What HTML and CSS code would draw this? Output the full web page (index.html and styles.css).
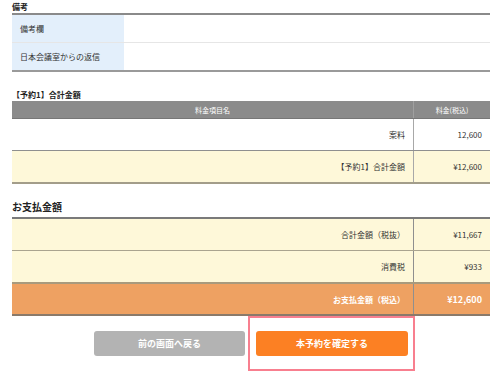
FILE: index.html
```html
<!DOCTYPE html>
<html lang="ja">
<head>
    <meta charset="UTF-8">
    <title>予約確認</title>
    <link rel="stylesheet" href="styles.css">
</head>
<body>
    <div class="page">
        <h3 class="sub-title first">備考</h3>
        <table class="note-table">
            <tr>
                <th>備考欄</th>
                <td></td>
            </tr>
            <tr>
                <th>日本会議室からの返信</th>
                <td></td>
            </tr>
        </table>

        <h3 class="sub-title">【予約1】合計金額</h3>
        <table class="price-table">
            <tr class="head">
                <th>料金項目名</th>
                <th class="price">料金(税込)</th>
            </tr>
            <tr class="plain">
                <td>案料</td>
                <td class="price">12,600</td>
            </tr>
            <tr class="total">
                <td>【予約1】合計金額</td>
                <td class="price">¥12,600</td>
            </tr>
        </table>

        <h2 class="pay-title">お支払金額</h2>
        <table class="price-table pay-table">
            <tr class="total">
                <td>合計金額（税抜）</td>
                <td class="price">¥11,667</td>
            </tr>
            <tr class="total">
                <td>消費税</td>
                <td class="price">¥933</td>
            </tr>
            <tr class="grand">
                <td>お支払金額（税込）</td>
                <td class="price">¥12,600</td>
            </tr>
        </table>

        <div class="actions">
            <button class="btn btn-back">前の画面へ戻る</button>
            <div class="highlight">
                <button class="btn btn-confirm">本予約を確定する</button>
            </div>
        </div>
    </div>
</body>
</html>
```

FILE: styles.css
```css
body {
    margin: 0;
    background-color: #fff;
    color: #333;
    font-family: "Noto Sans CJK JP", "Noto Sans", sans-serif;
}

.page {
    width: 478px;
    padding: 0 10px 0 12px;
}

.sub-title {
    margin: 0;
    font-size: 8px;
    font-weight: bold;
    line-height: 12px;
    height: 12px;
    padding-top: 1px;
    color: #222;
}

.first {
    padding-top: 1px;
}

table {
    width: 100%;
    border-collapse: collapse;
    font-size: 8px;
}

.note-table {
    border-top: 2px solid #8a8a8a;
    border-bottom: 2px solid #9a9a9a;
    margin-bottom: 16px;
}

.note-table th,
.note-table td {
    height: 27px;
    padding: 0;
    border-bottom: 1px solid #e6e6e6;
}

.note-table th {
    width: 104px;
    padding-left: 8px;
    text-align: left;
    font-weight: normal;
    background-color: #e3effb;
}

.price-table td,
.price-table th {
    padding: 0 8px;
    text-align: right;
}

.price-table .price {
    width: 60px;
    border-left: 1px solid #a8a8a8;
}

.head th {
    height: 17px;
    background-color: #8b8b8b;
    color: #fff;
    font-weight: normal;
    font-size: 7px;
    text-align: center;
    border-bottom: 1px solid #777;
}

.head th.price {
    text-align: center;
    border-left: 1px solid #a0a0a0;
}

.plain td {
    height: 31px;
    background-color: #fff;
    border-bottom: 1px solid #8f8f8f;
}

.total td {
    height: 31px;
    background-color: #fef8d9;
    border-bottom: 2px solid #a39d8a;
}

.pay-title {
    margin: 13px 0 0;
    height: 20px;
    font-size: 10px;
    line-height: 20px;
    font-weight: bold;
    color: #222;
}

.pay-table {
    border-top: 2px solid #7a7a7a;
}

.pay-table .total td {
    border-bottom: 1px solid #aaa48f;
}

.pay-table .total + .total td {
    border-bottom: 2px solid #a89a7d;
}

.pay-table .price {
    border-left: 1px solid #8f8f8f;
}

.grand td {
    height: 30px;
    background-color: #eea162;
    color: #fff;
    font-weight: bold;
    border-bottom: 2px solid #8a7a6a;
}

.grand .price {
    font-size: 9px;
}

.actions {
    display: flex;
    align-items: center;
    gap: 3px;
    padding-left: 82px;
}

.highlight {
    border: 2px solid #f87f8f;
    padding: 10px 5px 13px 6px;
}

.btn {
    width: 152px;
    height: 25px;
    border: none;
    border-radius: 3px;
    color: #fff;
    font-family: "Noto Sans CJK JP", sans-serif;
    font-size: 9px;
    font-weight: bold;
    cursor: pointer;
}

.btn-back {
    width: 151px;
    background-color: #b3b3b3;
}

.btn-confirm {
    background-color: #fc8023;
}
```
